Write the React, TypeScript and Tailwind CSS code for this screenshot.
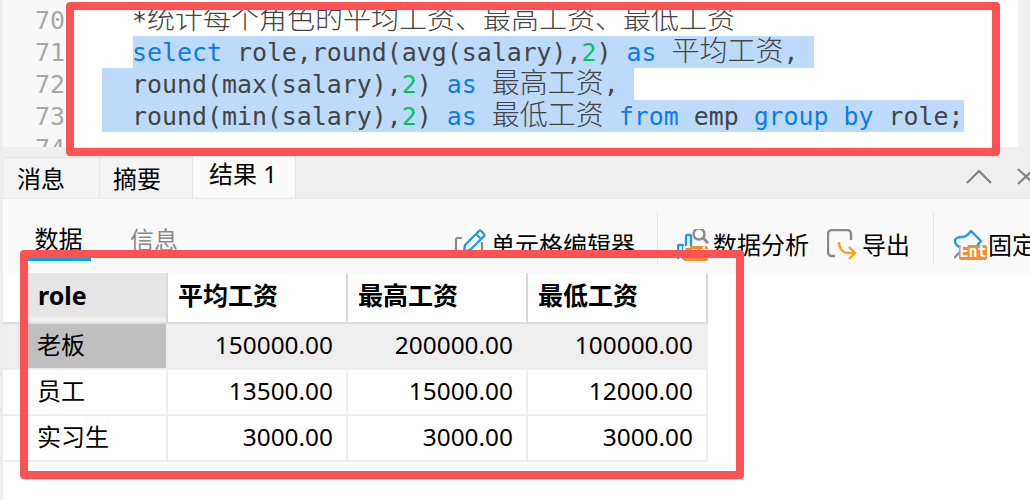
import type { ReactNode } from "react";

function Kw({ children }: { children: ReactNode }) {
  return <span className="text-[#0a7cf0]">{children}</span>;
}
function Num({ children }: { children: ReactNode }) {
  return <span className="text-[#0cc25a]">{children}</span>;
}
function Cjk({ children }: { children: ReactNode }) {
  return <span className="text-[28px] leading-none font-light">{children}</span>;
}

function EntBadge({ className }: { className: string }) {
  return (
    <span className={`absolute flex items-center justify-center rounded-[2px] bg-[#f98c2c] font-['DejaVu_Sans_Mono',monospace] text-[15px] leading-none font-bold text-white ${className}`}>
      Ent
    </span>
  );
}

function EditIcon() {
  return (
    <svg width="30" height="32" viewBox="0 0 30 32" fill="none" className="shrink-0 overflow-visible">
      <path d="M7 9H2.500A1.500 1.500 0 0 0 1 10.500V24" stroke="#8a8a8a" strokeWidth="2.200" />
      <path d="M27 13V24" stroke="#8a8a8a" strokeWidth="2.200" />
      <path d="M9 23l1-7L24 2a1.500 1.500 0 0 1 2.100 0l3 3a1.500 1.500 0 0 1 0 2.100L15 21z" stroke="#1e9bf0" strokeWidth="2.400" strokeLinejoin="round" />
      <path d="M21 5l5 5" stroke="#1e9bf0" strokeWidth="2" />
    </svg>
  );
}

function AnalysisIcon() {
  return (
    <span className="relative block h-[32px] w-[32px] shrink-0">
      <svg width="32" height="32" viewBox="0 0 32 32" fill="none">
        <path d="M1 30V17a1 1 0 0 1 1-1h3a1 1 0 0 1 1 1v13" stroke="#1e9bf0" strokeWidth="2.400" />
        <path d="M9 30V7a1 1 0 0 1 1-1h3a1 1 0 0 1 1 1v23" stroke="#1e9bf0" strokeWidth="2.400" />
        <circle cx="22" cy="5" r="5.500" stroke="#8a8a8a" strokeWidth="2.400" />
        <path d="M26 9l5 5" stroke="#8a8a8a" strokeWidth="2.800" />
      </svg>
      <EntBadge className="top-[17px] left-[6px] h-[15px] w-[25px]" />
    </span>
  );
}

function ExportIcon() {
  return (
    <svg width="30" height="32" viewBox="0 0 30 32" fill="none" className="shrink-0">
      <path d="M8 27H5a4 4 0 0 1-4-4V5a4 4 0 0 1 4-4h15a4 4 0 0 1 4 4v6" stroke="#8a8a8a" strokeWidth="2.400" />
      <path d="M12 13c0 7 4 11 10 11h6" stroke="#fba31b" strokeWidth="2.400" />
      <path d="M22 18l6 6-6 6" stroke="#fba31b" strokeWidth="2.400" />
    </svg>
  );
}

function PinIcon() {
  return (
    <span className="relative block h-[32px] w-[30px] shrink-0">
      <svg width="30" height="32" viewBox="0 0 30 32" fill="none">
        <path d="M1 11c1-2 3-3 7-3 4 0 6-2 9-6l10 10-5 6H6c-3-1-5-4-5-7z" stroke="#1e9bf0" strokeWidth="2.400" strokeLinejoin="round" />
        <path d="M0 29l6-6" stroke="#8a8a8a" strokeWidth="2.400" />
      </svg>
      <EntBadge className="top-[16px] left-[5px] h-[15px] w-[28px]" />
    </span>
  );
}

const rows = [
  { role: "老板", avg: "150000.00", max: "200000.00", min: "100000.00" },
  { role: "员工", avg: "13500.00", max: "15000.00", min: "12000.00" },
  { role: "实习生", avg: "3000.00", max: "3000.00", min: "3000.00" },
];

export default function App() {
  return (
    <div className="relative flex h-[500px] w-[1030px] flex-col overflow-hidden bg-[#ededed] pl-[3px] font-['Noto_Sans','Noto_Sans_CJK_SC',sans-serif] text-[24px] text-black">
      {/* editor */}
      <div className="flex h-[147px] shrink-0 overflow-hidden bg-white font-['DejaVu_Sans_Mono','Noto_Sans_CJK_SC',monospace] text-[24.9px] leading-[32px] text-[#444]">
        <div className="h-[147px] w-[62px] shrink-0 bg-[#f8f8f8] pt-[5px] text-right text-[#a8a8a8]">
          <div>70</div>
          <div>71</div>
          <div>72</div>
          <div>73</div>
          <div>74</div>
        </div>
        <div className="flex min-w-0 flex-1 flex-col pt-[4px] whitespace-pre">
          <div className="h-[32px] pt-[1px] pl-[68px] indent-[-1px]">*<Cjk>统计每个角色的平均工资、最高工资、最低工资</Cjk></div>
          <div className="ml-[68px] h-[32px] w-[681px] bg-[#bddafa] pt-[1px] indent-[-1px]">
            <Kw>select</Kw> role,round(avg(salary),<Num>2</Num>) <Kw>as</Kw> <Cjk>平均工资</Cjk>,
          </div>
          <div className="ml-[37px] h-[32px] w-[532px] bg-[#bddafa] pt-[1px] pl-[31px] indent-[-1px]">
            round(max(salary),<Num>2</Num>) <Kw>as</Kw> <Cjk>最高工资</Cjk>,
          </div>
          <div className="ml-[37px] h-[32px] w-[862px] bg-[#bddafa] pt-[1px] pl-[31px] indent-[-1px]">
            round(min(salary),<Num>2</Num>) <Kw>as</Kw> <Cjk>最低工资</Cjk> <Kw>from</Kw> emp <Kw>group</Kw> <Kw>by</Kw> role;
          </div>
        </div>
        <div className="h-[147px] w-[12px] shrink-0 bg-[#f0f0f0]" />
      </div>

      {/* tab bar */}
      <div className="flex h-[51px] shrink-0 items-end justify-between overflow-hidden bg-[#efefef] pl-[2px]">
        <div className="flex items-end">
          <div className="flex h-[41px] w-[95px] items-center border-t border-r border-[#e4e4e4] bg-[#f3f3f3] pt-[2px] pl-[12px]">消息</div>
          <div className="flex h-[41px] w-[93px] items-center border-t border-r border-[#e4e4e4] bg-[#f3f3f3] pt-[2px] pl-[13px]">摘要</div>
          <div className="flex h-[44px] w-[103px] items-center border-r border-[#e4e4e4] bg-[#fafafa] pb-[4px] pl-[16px]">结果 1</div>
        </div>
        <div className="flex items-center gap-[25px] self-start pt-[21px]">
          <svg width="26" height="15" viewBox="0 0 26 15" fill="none">
            <path d="M1 14L13 2l12 12" stroke="#808080" strokeWidth="2.200" />
          </svg>
          <svg width="16" height="17" viewBox="0 0 16 17" fill="none" className="-mr-[3px] overflow-visible">
            <path d="M1 1l16 15M17 1L1 16" stroke="#808080" strokeWidth="2.200" />
          </svg>
        </div>
      </div>

      {/* toolbar */}
      <div className="flex h-[75px] shrink-0 items-start overflow-hidden border-t border-[#e8e8e8] bg-[#fafafa]">
        <div className="ml-[25px] flex h-[62px] w-[63px] shrink-0 items-center justify-center border-b-[3px] border-[#00a8f0] pt-[20px] pr-[2px]">数据</div>
        <div className="ml-[39px] flex h-[62px] shrink-0 items-center pt-[20px] text-[#8a8a8a]">信息</div>
        <div className="mt-[13px] ml-[277px] flex h-[52px] shrink-0 items-center whitespace-nowrap">
          <div className="flex items-center gap-[6px] pt-[13px]">
            <EditIcon />
            <span>单元格编辑器</span>
          </div>
          <div className="ml-[22px] h-full w-px bg-[#e5e5e5]" />
          <div className="ml-[19px] flex items-center gap-[4px] pt-[13px]">
            <AnalysisIcon />
            <span>数据分析</span>
          </div>
          <div className="ml-[18px] flex items-center gap-[5px] pt-[13px]">
            <ExportIcon />
            <span>导出</span>
          </div>
          <div className="ml-[23px] h-full w-px bg-[#e5e5e5]" />
          <div className="ml-[20px] flex items-center gap-[4px] pt-[13px]">
            <PinIcon />
            <span>固定</span>
          </div>
        </div>
      </div>

      {/* table */}
      <div className="flex-1 bg-white">
        <div className="flex h-[51px] w-[705px] border-b-2 border-[#dddddd] text-[25px] font-bold">
          <div className="w-[25px] shrink-0" />
          <div className="flex w-[140px] shrink-0 items-center border-r-2 border-[#d9d9d9] bg-[#e6e6e6] pb-[4px] pl-[10px] shadow-[inset_0_-5px_0_#eeeeee]">role</div>
          <div className="flex w-[180px] shrink-0 items-center border-r-2 border-[#d9d9d9] pb-[4px] pl-[10px]">平均工资</div>
          <div className="flex w-[180px] shrink-0 items-center border-r-2 border-[#d9d9d9] pb-[4px] pl-[10px]">最高工资</div>
          <div className="flex w-[180px] shrink-0 items-center border-r-2 border-[#d9d9d9] pb-[4px] pl-[10px]">最低工资</div>
        </div>
        {rows.map((r, i) => (
          <div key={r.role} className={`flex h-[46px] w-[705px] border-b-2 border-[#eeeeee] text-[24.4px] ${i === 0 ? "bg-[#eeeeee]" : ""}`}>
            <div className="w-[25px] shrink-0" />
            <div className={`flex w-[140px] shrink-0 items-center border-r-2 border-[#eeeeee] pb-[2px] pl-[9px] text-[24px] ${i === 0 ? "bg-[#bfbfbf]" : ""}`}>{r.role}</div>
            <div className="flex w-[180px] shrink-0 items-center justify-end border-r-2 border-[#eeeeee] pr-[13px] pb-[2px]">{r.avg}</div>
            <div className="flex w-[180px] shrink-0 items-center justify-end border-r-2 border-[#eeeeee] pr-[13px] pb-[2px]">{r.max}</div>
            <div className="flex w-[180px] shrink-0 items-center justify-end border-r-2 border-[#eeeeee] pr-[13px] pb-[2px]">{r.min}</div>
          </div>
        ))}
      </div>

      {/* annotation rectangles over the screenshot */}
      <div className="pointer-events-none absolute top-[2px] left-[66px] h-[154px] w-[934px] rounded-[4px] border-[8px] border-[#ff5252]" />
      <div className="pointer-events-none absolute top-[250px] left-[20px] h-[229px] w-[724px] rounded-[4px] border-[8px] border-[#ff5252]" />
    </div>
  );
}
